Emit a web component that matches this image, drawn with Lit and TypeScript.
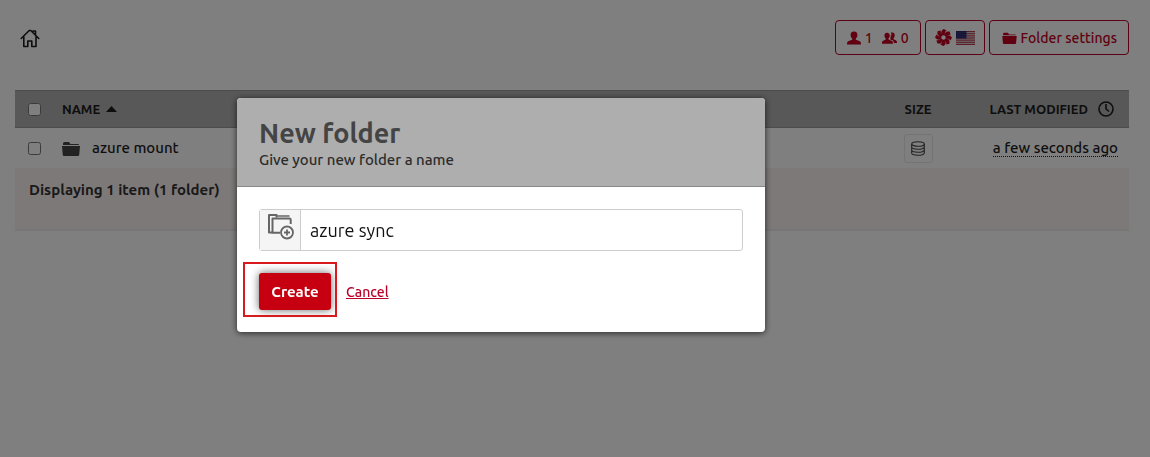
import { LitElement, html, css, svg } from "lit";
import { customElement, state } from "lit/decorators.js";

const folder = svg`<path d="M1 2.500Q1 1 2.500 1h4.500l1.500 2h7.500q1 0 1 1H1z"/><path d="M0 5h18l-.8 9q-.1 1-1.200 1H2q-1.100 0-1.200-1z"/>`;

const person = svg`<path d="M8 0c2.800 0 4.100 1.800 3.900 4.400-.1 1.700-.9 3-1.900 3.900v1.200l4 1.500c1.400.5 2 1.300 2 4H0c0-2.700.6-3.500 2-4l4-1.500V8.300c-1-.9-1.800-2.200-1.900-3.900C3.900 1.800 5.200 0 8 0z"/>`;

const blades = [0, 45, 90, 135, 180, 225, 270, 315];
const stripes = [0, 2, 4, 6, 8, 10, 12];

@customElement("app-root")
export class AppRoot extends LitElement {
  static styles = css`
    :host {
      display: block;
      min-height: 100vh;
      background: #fff;
      color: #1c1c1c;
      font: 15px/20px Ubuntu, "Noto Sans", sans-serif;
    }
    * { box-sizing: border-box; }
    svg { display: block; flex: none; }
    .page { padding: 20px 21px 0 15px; }
    .topbar {
      display: flex;
      align-items: center;
      justify-content: space-between;
      height: 35px;
      margin-bottom: 35px;
    }
    .home { padding-left: 5px; color: #1c1c1c; }
    .tools { display: flex; gap: 4px; }
    .tool {
      display: flex;
      align-items: center;
      gap: 4px;
      height: 35px;
      padding: 0 11px;
      border: 1px solid #b80028;
      border-radius: 4px;
      background: none;
      color: #c00020;
      font: inherit;
      font-size: 14px;
      font-weight: 500;
    }
    .second { margin-left: 5px; }
    .lang { padding: 0 9px; }
    .wide { padding: 0 11px 0 12px; }
    .files {
      width: 100%;
      border-collapse: collapse;
      text-align: left;
    }
    .files th {
      height: 37px;
      padding: 0;
      background: #b0b0b0;
      border-top: 1px solid #989898;
      border-bottom: 1px solid #989898;
      font-size: 13px;
      font-weight: 700;
    }
    .files td { height: 40px; padding: 1px 0 0; font-weight: 500; }
    .files .pick { width: 47px; padding-left: 13px; }
    .pick input { display: block; width: 13px; height: 13px; margin: 0; }
    .label { display: flex; align-items: center; gap: 6px; }
    .end { justify-content: flex-end; gap: 10px; padding-right: 15px; }
    .entry { display: flex; align-items: center; gap: 12px; }
    .files .size { width: 80px; text-align: center; }
    .files .date { width: 171px; }
    .files td.date { padding-right: 11px; text-align: right; }
    .stamp { border-bottom: 1px dotted #222; }
    .calc {
      display: flex;
      align-items: center;
      justify-content: center;
      width: 29px;
      height: 29px;
      margin: 0 auto;
      padding: 0;
      border: 1px solid #e8e8e8;
      border-radius: 3px;
      background: none;
      color: #444;
    }
    .files .summary {
      height: 62px;
      padding: 12px 14px;
      background: #fbf3f3;
      border-bottom: 2px solid #ececec;
      color: #333;
      font-size: 15px;
      font-weight: 600;
      vertical-align: top;
    }
    .overlay {
      position: fixed;
      inset: 0;
      padding: 98px 20px 20px 237px;
      background: rgba(0, 0, 0, 0.5);
    }
    .modal {
      width: 100%;
      max-width: 528px;
      overflow: hidden;
      border-radius: 4px;
      background: #fff;
      box-shadow: 0 1px 6px rgba(0, 0, 0, 0.7);
    }
    .modal-head {
      padding: 19px 22px 16px;
      background: #aeaeae;
      border-bottom: 1px solid #888;
    }
    .title {
      margin: 0;
      color: #444;
      font-size: 27px;
      line-height: 33px;
      font-weight: 700;
    }
    .hint { margin: 0; color: #2c2c2c; font-weight: 500; }
    .modal-body { padding: 22px; }
    .field {
      display: flex;
      height: 42px;
      margin-bottom: 22px;
      border: 1px solid #ccc;
      border-radius: 3px;
    }
    .addon {
      display: flex;
      justify-content: center;
      width: 41px;
      padding-top: 3px;
      border-right: 1px solid #ccc;
      background: #f5f5f5;
      color: #666;
    }
    .name {
      flex: 1;
      min-width: 0;
      padding: 0 9px;
      border: 0;
      outline: 0;
      background: none;
      color: #111;
      font: inherit;
      font-size: 18px;
    }
    .actions { display: flex; align-items: center; gap: 15px; }
    .marked { position: relative; }
    .marked::after {
      content: "";
      position: absolute;
      inset: -11px -6px -7px -16px;
      border: 2px solid #d8191e;
      pointer-events: none;
    }
    .create {
      display: block;
      width: 72px;
      height: 37px;
      padding: 0;
      border: 0;
      border-radius: 3px;
      background: #c60010;
      color: #fff;
      font: inherit;
      font-size: 15px;
      font-weight: 700;
      box-shadow: 0 0 8px rgba(0, 0, 0, 0.6);
    }
    .cancel { color: #b80028; font-size: 14px; font-weight: 500; }
  `;

  @state() private folderName = "azure sync";

  private onInput(e: Event) {
    this.folderName = (e.target as HTMLInputElement).value;
  }

  render() {
    return html`
      <div class="page">
        <header class="topbar">
          <a class="home" href="#" aria-label="Home">
            <svg width="20" height="20" viewBox="0 0 20 20" fill="none" stroke="currentColor" stroke-width="1.600" stroke-linejoin="round" stroke-linecap="round">
              <path d="M1.200 10.500 9.200 2.500h1.600L18.800 10.500M3.800 8.500v10h4V13h4v5.500h4.200v-10M13 4V3h2.500v3.500"/>
            </svg>
          </a>
          <div class="tools">
            <button class="tool" aria-label="Users and groups">
              <svg width="14" height="14" viewBox="0 0 16 15" fill="currentColor">${person}</svg>
              <span>1</span>
              <svg class="second" width="15" height="12" viewBox="0 0 20 15" fill="currentColor">
                <path d="M13.500 0c2.700 0 3.800 2 3.400 4.500-.2 1.500-.8 2.500-1.500 3.300v1.400l3 1.400c1.300.6 1.600 1.400 1.600 3.700h-4.300c0-2.400-.8-3.400-2.200-4l-2-.9v-1c1.500-2.500 1.800-5 .2-7.900.500-.3 1.100-.5 1.800-.5z"/>
                <path d="M6.700.5c2.700 0 3.800 1.800 3.600 4.300-.1 1.500-.8 2.700-1.700 3.500v1.300l4.200 1.600c1.300.5 1.800 1.300 1.800 3.800H0c0-2.500.4-3.300 1.700-3.800l3.300-1.600V8.300C4.100 7.500 3.400 6.300 3.300 4.800 3.100 2.300 4.100.5 6.700.5z"/>
                <path d="M12.500 4v6" stroke="currentColor" stroke-width="2"/>
              </svg>
              <span>0</span>
            </button>
            <button class="tool lang" aria-label="Language">
              <svg width="17" height="17" viewBox="-9 -9 18 18" fill="currentColor">
                ${blades.map((a) => svg`<path transform="rotate(${a})" d="M-.9-2.300C-3.200-4.200-2.900-7.300.2-9L3.300-7.300C1.700-6.300 1-4.800 1.500-2.200z"/>`)}
              </svg>
              <svg width="19" height="14" viewBox="0 0 19 13" preserveAspectRatio="none">
                <rect width="19" height="13" fill="#d8d8dc"/>
                ${stripes.map((y) => svg`<rect y=${y} width="19" height="1" fill="#b83a4c"/>`)}
                <rect width="10.500" height="7" fill="#28286e"/>
                <path d="M1 1.500h9M1 3.500h9M1 5.500h9" stroke="#7d7daa" stroke-width=".5" stroke-dasharray=".7 1"/>
              </svg>
            </button>
            <button class="tool wide">
              <svg width="15" height="12" viewBox="0 0 18 15" fill="currentColor">${folder}</svg>
              Folder settings
            </button>
          </div>
        </header>

        <table class="files">
          <thead>
            <tr>
              <th class="pick"><input type="checkbox" aria-label="Select all" /></th>
              <th>
                <span class="label">NAME
                  <svg width="11" height="6" viewBox="0 0 11 6" fill="currentColor"><path d="M5.500 0 11 6H0z"/></svg>
                </span>
              </th>
              <th class="size">SIZE</th>
              <th class="date">
                <span class="label end">LAST MODIFIED
                  <svg width="16" height="16" viewBox="0 0 16 16" fill="none" stroke="currentColor" stroke-width="1.600"><circle cx="8" cy="8" r="7"/><path d="M8 3v5l3 2.500"/></svg>
                </span>
              </th>
            </tr>
          </thead>
          <tbody>
            <tr>
              <td class="pick"><input type="checkbox" aria-label="Select azure mount" /></td>
              <td>
                <span class="entry">
                  <svg width="18" height="15" viewBox="0 0 18 15" fill="#444">${folder}</svg>
                  azure mount
                </span>
              </td>
              <td class="size">
                <button class="calc" aria-label="Calculate size">
                  <svg width="14" height="15" viewBox="0 0 14 15" fill="none" stroke="currentColor" stroke-width="1.100">
                    <ellipse cx="7" cy="3" rx="6.300" ry="2.300"/>
                    <path d="M.7 3v9c0 3 12.600 3 12.600 0V3M.7 6c0 3 12.600 3 12.600 0M.7 9c0 3 12.600 3 12.600 0"/>
                  </svg>
                </button>
              </td>
              <td class="date"><span class="stamp">a few seconds ago</span></td>
            </tr>
          </tbody>
          <tfoot>
            <tr><td class="summary" colspan="4">Displaying 1 item (1 folder)</td></tr>
          </tfoot>
        </table>
      </div>

      <div class="overlay">
        <section class="modal" role="dialog" aria-modal="true" aria-labelledby="title">
          <header class="modal-head">
            <h2 class="title" id="title">New folder</h2>
            <p class="hint" id="hint">Give your new folder a name</p>
          </header>
          <div class="modal-body">
            <div class="field">
              <label class="addon" for="name" aria-label="Folder name">
                <svg width="27" height="27" viewBox="0 0 27 27" fill="none" stroke="currentColor" stroke-width="2" stroke-linejoin="round">
                  <path d="M5.500 19.500H2V2h7.500v2.500"/>
                  <path d="M13 19.800H5.500V5.500h17q1.200 0 1.200 1.200V11"/>
                  <path d="M9.500 3h13" stroke-width="1.400"/>
                  <circle cx="20" cy="19.500" r="6" stroke-width="1.800"/>
                  <path d="M20 16.500v6M17 19.500h6" stroke-width="1.800"/>
                </svg>
              </label>
              <input class="name" id="name" type="text" aria-describedby="hint" .value=${this.folderName} @input=${this.onInput} />
            </div>
            <div class="actions">
              <span class="marked"><button class="create">Create</button></span>
              <a class="cancel" href="#">Cancel</a>
            </div>
          </div>
        </section>
      </div>
    `;
  }
}
